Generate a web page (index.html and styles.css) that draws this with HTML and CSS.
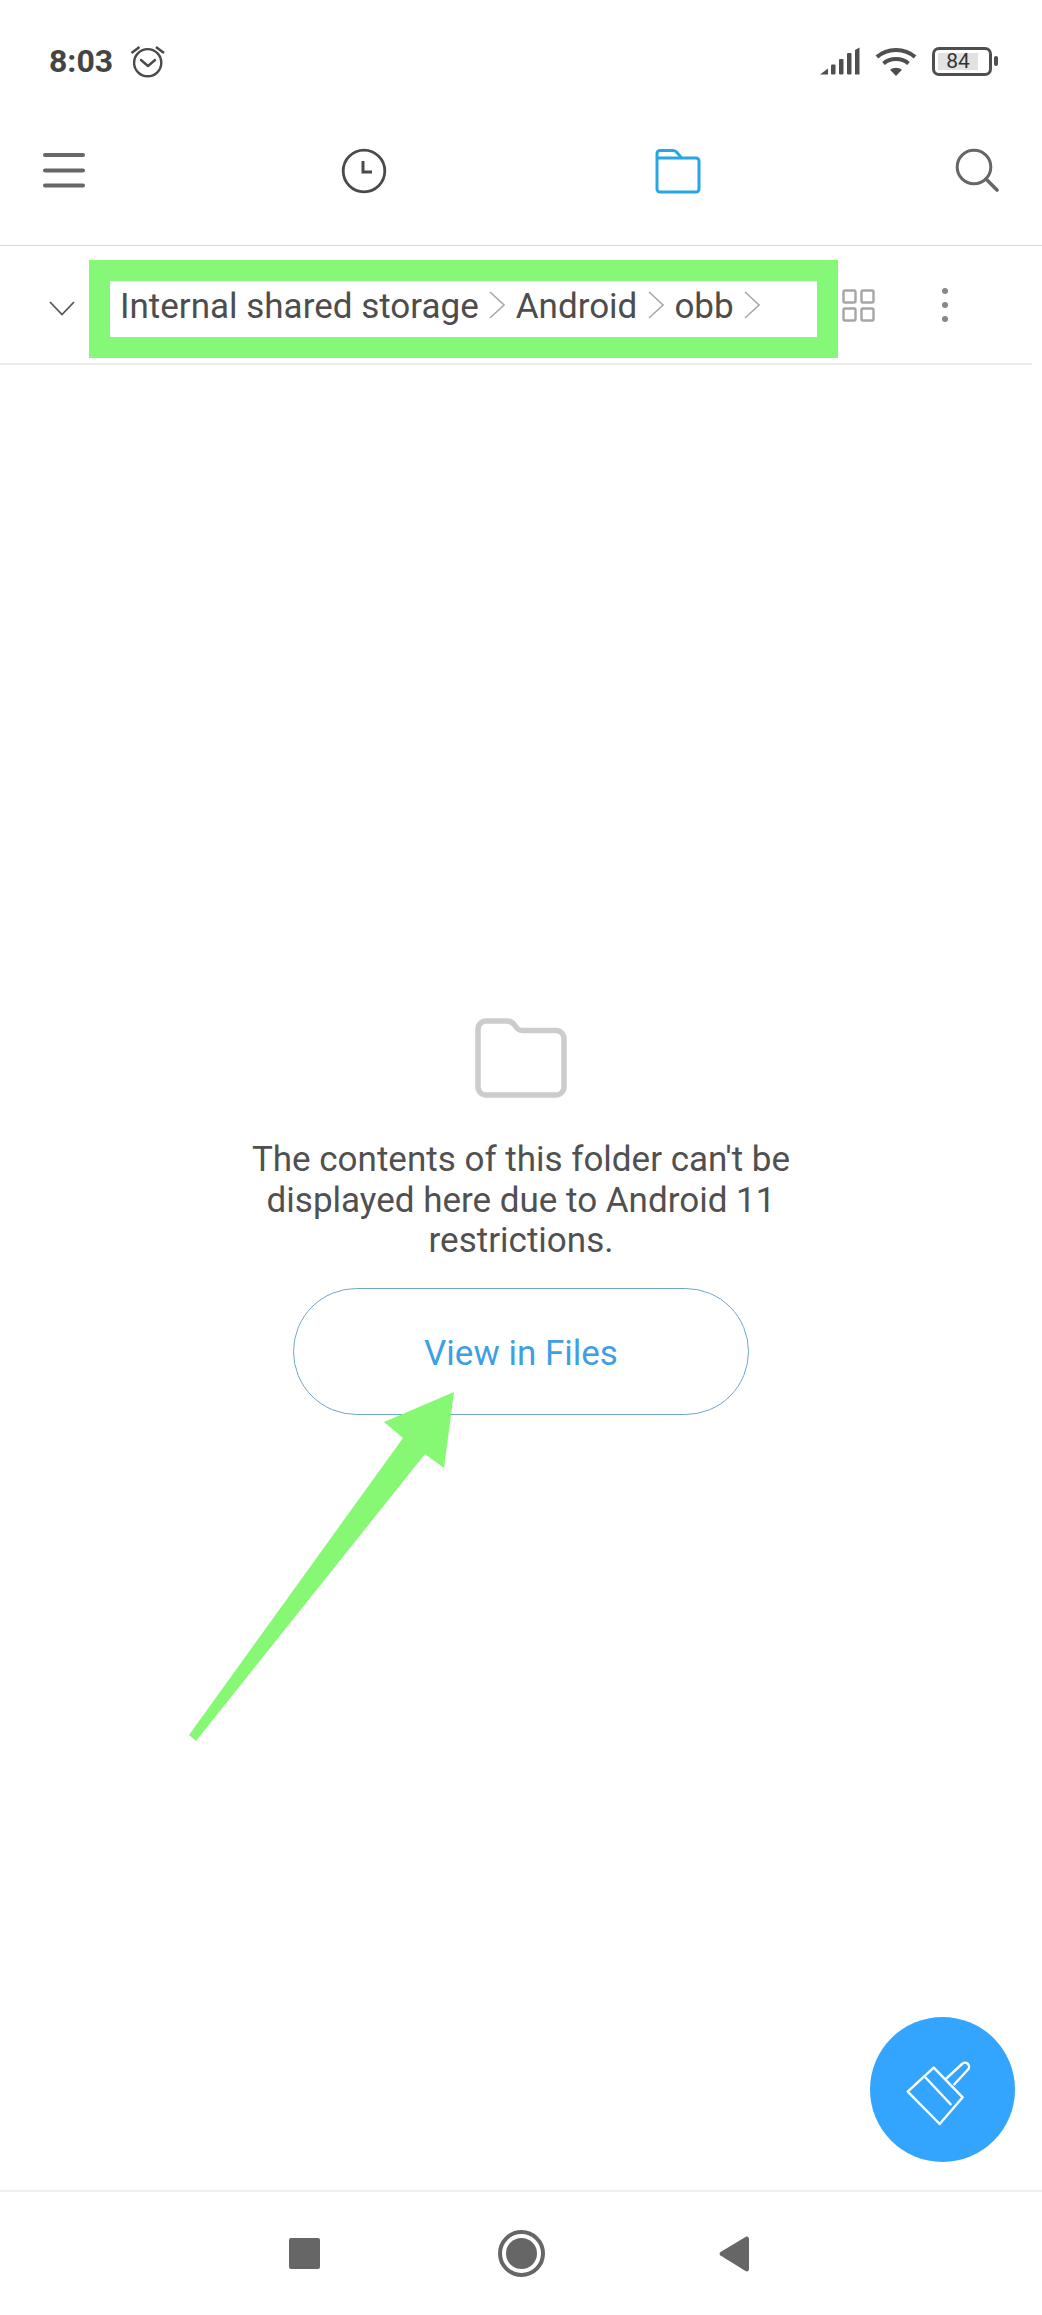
FILE: index.html
```html
<!DOCTYPE html>
<html>
<head>
    <title>Files</title>
    <link rel="stylesheet" href="styles.css">
</head>
<body>
    <div class="screen">
        <div class="status-bar">
            <span class="time">8:03</span>
            <svg class="alarm-icon" width="36" height="36" viewBox="0 0 36 36" fill="none" stroke="#4a4a4a" stroke-width="2.4">
                <circle cx="17.7" cy="19.7" r="13.6"/>
                <path d="M11 17l7 6 7-6" stroke-linecap="round" stroke-linejoin="round"/>
                <path d="M1.5 10L9.5 4M34 10L26 4" stroke-width="2.6"/>
            </svg>
            <div class="status-right">
                <svg width="40" height="28" viewBox="0 0 40 28" fill="#4f4f4f">
                    <path d="M0 27.5L8 21.5v6z"/>
                    <rect x="11" y="17.5" width="4.5" height="10" rx="1"/>
                    <rect x="19" y="12" width="4.5" height="15.5" rx="1"/>
                    <rect x="27" y="6" width="4.5" height="21.5" rx="1"/>
                    <path d="M35 3l4.500-2.500v27H35z"/>
                </svg>
                <svg class="wifi-icon" width="42" height="30" viewBox="0 0 42 30" fill="none" stroke="#4f4f4f" stroke-width="4">
                    <path d="M2 11C12 1.500 30 1.500 40 11"/>
                    <path d="M8.500 17.500C15 11.500 27 11.500 33.500 17.500"/>
                    <path d="M21 30l-6-6.200C18 21 24 21 27 23.800z" fill="#4f4f4f" stroke="none"/>
                </svg>
                <div class="battery">
                    <div class="battery-body"><span class="battery-level">84</span></div>
                    <div class="battery-nub"></div>
                </div>
            </div>
        </div>

        <div class="toolbar">
            <svg class="tool-menu" width="42" height="36" viewBox="0 0 42 36" fill="#666">
                <rect x="0" y="0" width="42" height="4" rx="2"/>
                <rect x="0" y="15.5" width="42" height="4" rx="2"/>
                <rect x="0" y="30.5" width="42" height="4" rx="2"/>
            </svg>
            <svg class="tool-clock" width="46" height="46" viewBox="0 0 46 46" fill="none" stroke="#4a4a4a" stroke-width="2.8">
                <circle cx="23" cy="23" r="20.8"/>
                <path d="M22 13v11h9" stroke-width="3"/>
            </svg>
            <svg class="tool-folder" width="46" height="46" viewBox="0 0 46 46" fill="none" stroke="#27a6e5" stroke-width="3">
                <path d="M2 5.500a3 3 0 0 1 3-3h13c2 0 3 .8 4 2l4.500 5.500H41a3 3 0 0 1 3 3V41a3 3 0 0 1-3 3H5a3 3 0 0 1-3-3z" stroke-linejoin="round"/>
                <path d="M2 10h24"/>
            </svg>
            <svg class="tool-search" width="44" height="46" viewBox="0 0 44 46" fill="none" stroke="#666" stroke-width="3">
                <circle cx="19" cy="19" r="16.8"/>
                <path d="M31 31l11 11" stroke-width="3.6" stroke-linecap="round"/>
            </svg>
        </div>

        <div class="path-bar">
            <svg class="path-toggle" width="26" height="15" viewBox="0 0 26 15" fill="none" stroke="#555" stroke-width="1.8">
                <path d="M1 1l12 12.500L25 1"/>
            </svg>
            <div class="path-box">
                <span class="crumb">Internal shared storage</span>
                <svg class="crumb-sep" width="16" height="28" viewBox="0 0 16 28" fill="none" stroke="#aaa" stroke-width="1.6"><path d="M1 1l14 13L1 27"/></svg>
                <span class="crumb">Android</span>
                <svg class="crumb-sep" width="16" height="28" viewBox="0 0 16 28" fill="none" stroke="#aaa" stroke-width="1.6"><path d="M1 1l14 13L1 27"/></svg>
                <span class="crumb">obb</span>
                <svg class="crumb-sep" width="16" height="28" viewBox="0 0 16 28" fill="none" stroke="#aaa" stroke-width="1.6"><path d="M1 1l14 13L1 27"/></svg>
            </div>
            <svg class="grid-icon" width="33" height="33" viewBox="0 0 33 33" fill="none" stroke="#a6a6a6" stroke-width="2.4">
                <rect x="1.500" y="1.500" width="12" height="12" rx="1.500"/>
                <rect x="19.500" y="1.500" width="12" height="12" rx="1.500"/>
                <rect x="1.500" y="19.500" width="12" height="12" rx="1.500"/>
                <rect x="19.500" y="19.500" width="12" height="12" rx="1.500"/>
            </svg>
            <div class="more-dots">
                <span class="dot"></span>
                <span class="dot"></span>
                <span class="dot"></span>
            </div>
        </div>

        <div class="empty">
            <svg class="empty-folder" width="92" height="80" viewBox="0 0 92 80" fill="none" stroke="#cccccc" stroke-width="5.500">
                <path d="M3 11a8 8 0 0 1 8-8h20c5 0 7 1.500 9 4.500 2 3 3.500 5 8 5h33a8 8 0 0 1 8 8V69a8 8 0 0 1-8 8H11a8 8 0 0 1-8-8z" stroke-linejoin="round"/>
            </svg>
            <p class="empty-text">The contents of this folder can't be displayed here due to Android 11 restrictions.</p>
            <div class="open-button">View in Files</div>
        </div>

        <div class="nav-bar">
            <div class="nav-square"></div>
            <div class="nav-home"><div class="nav-home-inner"></div></div>
            <svg class="nav-back" width="30" height="36" viewBox="0 0 30 36" fill="#666">
                <path d="M26.500 1L1.500 16a2.200 2.200 0 0 0 0 3.600L26.500 35c1.800 1 3.500 0 3.500-2V3c0-2-1.700-3-3.500-2z"/>
            </svg>
        </div>

        <svg class="arrow" width="1042" height="2315" viewBox="0 0 1042 2315">
            <polygon points="454,1392 384,1422 403,1438 189,1735 196,1741 425,1454 444,1468" fill="#86f874"/>
        </svg>

        <div class="fab">
            <svg width="145" height="145" viewBox="0 0 145 145" fill="none" stroke="#fff" stroke-width="2.4" stroke-linejoin="round">
                <path d="M63.700 50.700L37.700 74.700 69.700 107 92.700 80.300z"/>
                <path d="M55.300 60.300L81.300 88"/>
                <path d="M75.300 62.300L92 47a4 4 0 0 1 6 5.500L83.700 68"/>
            </svg>
        </div>
    </div>
</body>
</html>
```

FILE: styles.css
```css
body {
    margin: 0;
    background-color: white;
    font-family: Roboto, "Liberation Sans", sans-serif;
    color: #444;
}
.screen {
    position: relative;
    width: 1042px;
    height: 2315px;
    display: flex;
    flex-direction: column;
    overflow: hidden;
}
.status-bar {
    height: 122px;
    display: flex;
    align-items: center;
    padding-left: 49px;
    box-sizing: border-box;
}
.time {
    font-size: 32px;
    font-weight: 700;
    color: #444;
}
.alarm-icon {
    margin-left: 17px;
}
.status-right {
    margin-left: auto;
    margin-right: 44px;
    display: flex;
    align-items: center;
    gap: 15px;
}
.battery {
    display: flex;
    align-items: center;
    gap: 2px;
}
.battery-body {
    width: 60px;
    height: 29px;
    box-sizing: border-box;
    border: 3px solid #4f4f4f;
    border-radius: 7px;
    padding: 3px;
}
.battery-level {
    display: block;
    width: 40px;
    height: 17px;
    background-color: #e2e2e2;
    font-size: 21px;
    line-height: 17px;
    text-align: center;
    color: #333;
}
.battery-nub {
    width: 4px;
    height: 10px;
    background-color: #4f4f4f;
    border-radius: 2px;
}
.toolbar {
    height: 123px;
    padding-bottom: 25px;
    box-sizing: border-box;
    display: flex;
    align-items: center;
    padding-left: 43px;
}
.tool-clock {
    margin-left: 256px;
}
.tool-folder {
    margin-left: 268px;
}
.tool-search {
    margin-left: 254px;
}
.path-bar {
    position: relative;
    height: 120px;
    box-sizing: border-box;
    border-top: 1px solid #d8d8d8;
    padding-top: 14px;
    display: flex;
    align-items: flex-start;
}
.path-bar::after {
    content: "";
    position: absolute;
    left: 0;
    right: 10px;
    bottom: 0;
    border-bottom: 2px solid #ececec;
}
.path-toggle {
    margin: 41px 0 0 49px;
}
.path-box {
    margin-left: 14px;
    width: 749px;
    height: 98px;
    box-sizing: border-box;
    border: 21px solid #86f877;
    padding: 0 0 5px 10px;
    display: flex;
    align-items: center;
    gap: 10.5px;
}
.crumb {
    font-size: 35px;
    color: #4d4d4d;
    white-space: nowrap;
}
.crumb-sep {
    margin-bottom: 4px;
}
.grid-icon {
    margin: 29px 0 0 4px;
}
.more-dots {
    margin: 28px 0 0 67px;
    display: flex;
    flex-direction: column;
    gap: 8px;
}
.dot {
    width: 6px;
    height: 6px;
    border-radius: 50%;
    background-color: #888;
}
.empty {
    flex: 1;
    display: flex;
    flex-direction: column;
    align-items: center;
    padding-top: 653px;
}
.empty-folder {
    display: block;
}
.empty-text {
    width: 580px;
    margin: 42px 0 0;
    font-size: 35px;
    line-height: 40.5px;
    text-align: center;
    color: #505050;
}
.open-button {
    width: 456px;
    height: 127px;
    box-sizing: border-box;
    margin-top: 26px;
    padding-top: 4px;
    border: 1px solid #6fa8c6;
    border-radius: 64px;
    display: flex;
    align-items: center;
    justify-content: center;
    font-size: 35px;
    color: #3f9fe2;
}
.nav-bar {
    height: 125px;
    box-sizing: border-box;
    border-top: 2px solid #efefef;
    display: flex;
    align-items: center;
    padding: 0 0 0 289px;
}
.nav-square {
    width: 31px;
    height: 31px;
    background-color: #666;
    border-radius: 2px;
}
.nav-home {
    width: 47px;
    height: 47px;
    box-sizing: border-box;
    margin-left: 178px;
    border: 4px solid #666;
    border-radius: 50%;
    padding: 4px;
}
.nav-home-inner {
    width: 31px;
    height: 31px;
    border-radius: 50%;
    background-color: #666;
}
.nav-back {
    margin-left: 174px;
}
.arrow {
    position: absolute;
    left: 0;
    top: 0;
    pointer-events: none;
}
.fab {
    position: absolute;
    left: 870px;
    top: 2017px;
    width: 145px;
    height: 145px;
    border-radius: 50%;
    background-color: #33a5ff;
}
```
